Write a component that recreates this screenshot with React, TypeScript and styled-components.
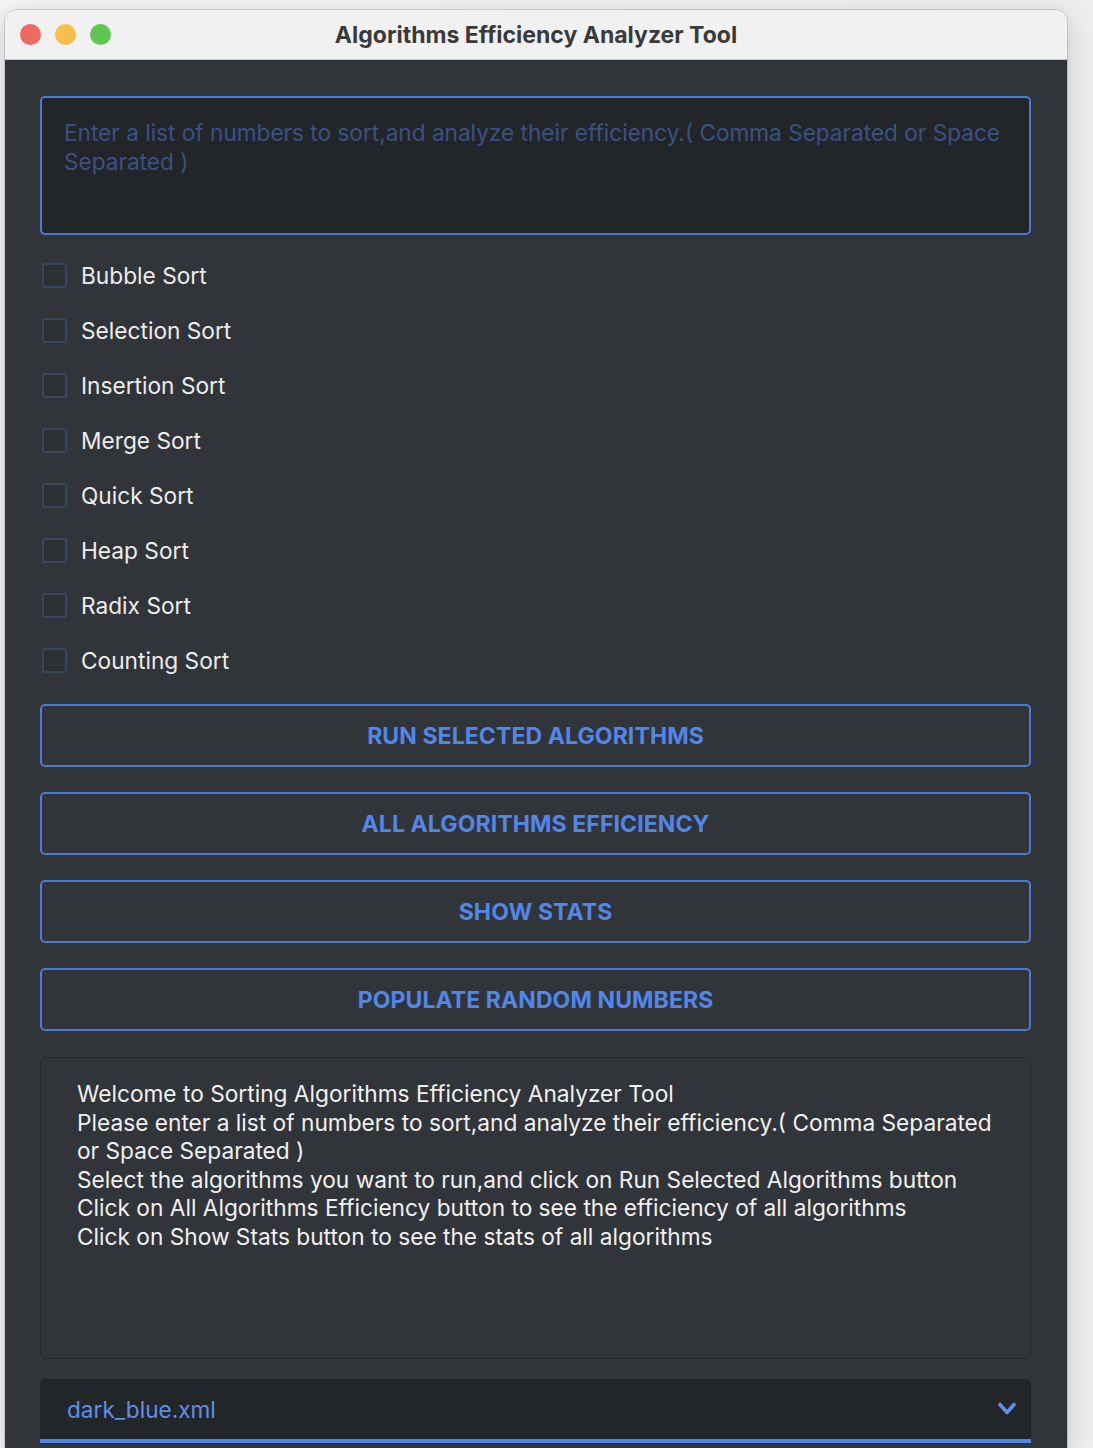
import React from 'react';
import styled, { createGlobalStyle } from 'styled-components';

const GlobalStyle = createGlobalStyle`
  html, body {
    margin: 0;
    padding: 0;
    height: 100%;
    overflow: hidden;
    background: linear-gradient(90deg, #f4f4f4 0%, #ededed 100%);
  }
  * {
    box-sizing: border-box;
  }
`;

const Desktop = styled.div`
  padding: 10px 0 0 5px;
  height: 1448px;
`;

const Window = styled.div`
  width: 1062px;
  height: 1438px;
  border-radius: 12px 12px 0 0;
  overflow: hidden;
  display: flex;
  flex-direction: column;
  box-shadow: 0 0 0 1px rgba(0, 0, 0, 0.12), 0 6px 24px rgba(0, 0, 0, 0.18);
`;

const TitleBar = styled.div`
  height: 50px;
  flex-shrink: 0;
  background: #f1f1f1;
  border-bottom: 1px solid #c9c9c9;
  display: flex;
  align-items: center;
  position: relative;
  padding-left: 15px;
`;

const Lights = styled.div`
  display: flex;
  gap: 14px;
`;

const Light = styled.span<{ $color: string }>`
  width: 21px;
  height: 21px;
  border-radius: 50%;
  background: ${(p) => p.$color};
  display: inline-block;
`;

const Title = styled.div`
  position: absolute;
  left: 0;
  right: 0;
  text-align: center;
  font-family: Inter, 'Liberation Sans', sans-serif;
  font-weight: 700;
  font-size: 23px;
  color: #3a3a3a;
  pointer-events: none;
`;

const Body = styled.div`
  flex: 1;
  background: #31353a;
  padding: 36px 36px 0 35px;
  display: flex;
  flex-direction: column;
  font-family: Inter, Roboto, 'Liberation Sans', sans-serif;
`;

const NumbersInput = styled.div`
  height: 139px;
  border: 2px solid #4d78d4;
  border-radius: 5px;
  background: #232629;
  padding: 20px 22px;
  font-size: 22.6px;
  line-height: 29px;
  color: #3b5185;
`;

const CheckList = styled.div`
  margin-top: 13px;
  display: flex;
  flex-direction: column;
`;

const CheckRow = styled.label`
  height: 55px;
  display: flex;
  align-items: center;
  gap: 14px;
  padding-left: 2px;
  font-size: 22.7px;
  color: #ececec;
`;

const Box = styled.span`
  width: 25px;
  height: 25px;
  border: 2px solid #3a4560;
  border-radius: 3px;
  background: #2b3033;
`;

const Buttons = styled.div`
  margin-top: 16px;
  display: flex;
  flex-direction: column;
  gap: 25px;
`;

const ActionButton = styled.button`
  height: 63px;
  background: transparent;
  border: 2px solid #4d78d4;
  border-radius: 5px;
  color: #5287ea;
  font-family: Inter, Roboto, 'Liberation Sans', sans-serif;
  font-weight: 700;
  font-size: 23px;
  letter-spacing: 0.1px;
  text-transform: uppercase;
`;

const Console = styled.div`
  margin-top: 26px;
  height: 302px;
  border: 1px solid #25282c;
  border-radius: 6px;
  background: #31353a;
  padding: 22px 36px;
  font-size: 22.7px;
  line-height: 28.5px;
  color: #f0f0f0;
`;

const ThemeSelect = styled.div`
  margin-top: 20px;
  height: 64px;
  background: #232629;
  border-radius: 5px 5px 0 0;
  border-bottom: 4px solid #5184e6;
  display: flex;
  align-items: center;
  justify-content: space-between;
  padding: 0 14px 0 27px;
  color: #5f8fe8;
  font-size: 22.6px;
`;

const algorithms = [
  'Bubble Sort',
  'Selection Sort',
  'Insertion Sort',
  'Merge Sort',
  'Quick Sort',
  'Heap Sort',
  'Radix Sort',
  'Counting Sort',
];

const actions = [
  'Run Selected Algorithms',
  'All Algorithms Efficiency',
  'Show Stats',
  'Populate Random Numbers',
];

const App: React.FunctionComponent = () => {
  return (
    <>
      <GlobalStyle />
      <Desktop>
        <Window>
          <TitleBar>
            <Lights>
              <Light $color="#ec6a5e" />
              <Light $color="#f4bf4f" />
              <Light $color="#61c554" />
            </Lights>
            <Title>Algorithms Efficiency Analyzer Tool</Title>
          </TitleBar>
          <Body>
            <NumbersInput>
              Enter a list of numbers to sort,and analyze their efficiency.( Comma Separated or Space
              Separated )
            </NumbersInput>
            <CheckList>
              {algorithms.map((name) => (
                <CheckRow key={name}>
                  <Box />
                  {name}
                </CheckRow>
              ))}
            </CheckList>
            <Buttons>
              {actions.map((label) => (
                <ActionButton key={label}>{label}</ActionButton>
              ))}
            </Buttons>
            <Console>
              Welcome to Sorting Algorithms Efficiency Analyzer Tool
              <br />
              Please enter a list of numbers to sort,and analyze their efficiency.( Comma Separated
              <br />
              or Space Separated )
              <br />
              Select the algorithms you want to run,and click on Run Selected Algorithms button
              <br />
              Click on All Algorithms Efficiency button to see the efficiency of all algorithms
              <br />
              Click on Show Stats button to see the stats of all algorithms
            </Console>
            <ThemeSelect>
              <span>dark_blue.xml</span>
              <svg width="20" height="16" viewBox="0 0 20 16">
                <path
                  d="M3 3.5 L10 11.5 L17 3.5"
                  fill="none"
                  stroke="#5f8fe8"
                  strokeWidth="3.6"
                  strokeLinecap="round"
                  strokeLinejoin="round"
                />
              </svg>
            </ThemeSelect>
          </Body>
        </Window>
      </Desktop>
    </>
  );
};

export default App;
